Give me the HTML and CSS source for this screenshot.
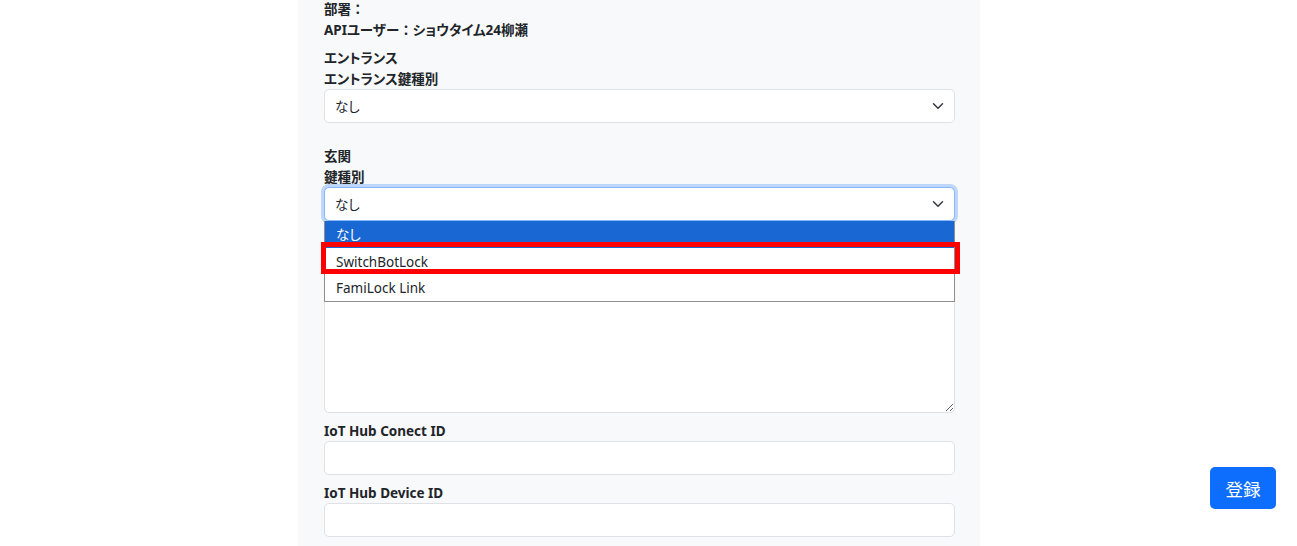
FILE: index.html
```html
<!DOCTYPE html>
<html lang="ja">
<head>
    <meta charset="UTF-8">
    <meta name="viewport" content="width=device-width, initial-scale=1.0">
    <title>鍵設定</title>
    <link rel="stylesheet" href="styles.css">
</head>
<body>
    <div class="panel">
        <div class="info">
            <p>部署<span class="colon">：</span></p>
            <p>APIユーザー<span class="colon">：</span>ショウタイム24柳瀬</p>
        </div>

        <div class="section first">
            <div class="label">エントランス</div>
            <div class="label">エントランス鍵種別</div>
            <div class="select">
                <span class="value">なし</span>
                <svg class="chevron" viewBox="0 0 16 16"><path d="m2 5 6 6 6-6"/></svg>
            </div>
        </div>

        <div class="section">
            <div class="label">玄関</div>
            <div class="label">鍵種別</div>
            <div class="select focused">
                <span class="value">なし</span>
                <svg class="chevron" viewBox="0 0 16 16"><path d="m2 5 6 6 6-6"/></svg>
                <!-- open option list -->
                <div class="options">
                    <div class="option active">なし</div>
                    <div class="option">SwitchBotLock</div>
                    <div class="option">FamiLock Link</div>
                    <div class="mark"></div>
                </div>
            </div>
        </div>

        <!-- label hidden behind the open list -->
        <div class="section">
            <div class="label-space"></div>
            <textarea class="textarea"></textarea>
        </div>

        <div class="group">
            <div class="label">IoT Hub Conect ID</div>
            <input class="input" type="text">
        </div>

        <div class="group">
            <div class="label">IoT Hub Device ID</div>
            <input class="input" type="text">
        </div>
    </div>

    <button class="btn-submit">登録</button>
</body>
</html>
```

FILE: styles.css
```css
* { margin: 0; padding: 0; box-sizing: border-box; }
body {
    font-family: 'Noto Sans', 'Noto Sans CJK JP', sans-serif;
    font-size: 13.5px;
    font-feature-settings: "palt";
    color: #212529;
    background: white;
    overflow: hidden;
}
.colon { font-feature-settings: normal; }
.panel {
    margin-left: 298px;
    width: 682px;
    min-height: 100vh;
    background: #f8f9fa;
    padding: 0 25px 20px 26px;
}
.info { margin-top: -2px; }
.info p {
    font-weight: bold;
    line-height: 22px;
}
.info p:first-child { height: 21px; }
.section { margin-top: 22px; }
.section.first { margin-top: 6px; }
.group { margin-top: 7px; }
.group:first-of-type { margin-top: 8px; }
.label {
    font-weight: bold;
    padding-top: 2px;
    line-height: 19px;
}
.label-space { height: 21px; }
.select {
    position: relative;
    display: flex;
    align-items: center;
    height: 34px;
    background: white;
    border: 1px solid #dee2e6;
    border-radius: 5px;
    padding: 0 10px;
}
.select .value { flex: 1; }
.select.focused {
    border-color: #86b7fe;
    box-shadow: 0 0 0 3px rgba(13,110,253,0.25);
}
.chevron {
    width: 12px;
    height: 12px;
    fill: none;
    stroke: #343a40;
    stroke-width: 2;
    stroke-linecap: round;
    stroke-linejoin: round;
}
.options {
    position: absolute;
    top: calc(100% + 1px);
    left: -1px;
    width: 631px;
    background: white;
    border: 1px solid #8f8f8f;
    border-top: none;
    z-index: 5;
}
.option {
    height: 26.5px;
    line-height: 26.5px;
    padding-left: 11px;
    padding-top: 1px;
    font-size: 13.5px;
    color: #212529;
    overflow: hidden;
}
.option.active {
    background: #1967d2;
    color: white;
}
.mark {
    position: absolute;
    left: -4px;
    top: 21px;
    width: 639px;
    height: 32px;
    border: 5px solid #ff0000;
}
.textarea {
    display: block;
    width: 100%;
    height: 149px;
    background: white;
    border: 1px solid #dee2e6;
    border-radius: 5px;
    font: inherit;
}
.input {
    display: block;
    width: 100%;
    height: 34px;
    background: white;
    border: 1px solid #dee2e6;
    border-radius: 5px;
    font: inherit;
}
.btn-submit {
    position: fixed;
    right: 21px;
    bottom: 37px;
    width: 66px;
    height: 42px;
    background: #0d6efd;
    color: white;
    border: none;
    border-radius: 5px;
    font-family: 'Noto Sans CJK JP', sans-serif;
    font-size: 17.5px;
}
```
